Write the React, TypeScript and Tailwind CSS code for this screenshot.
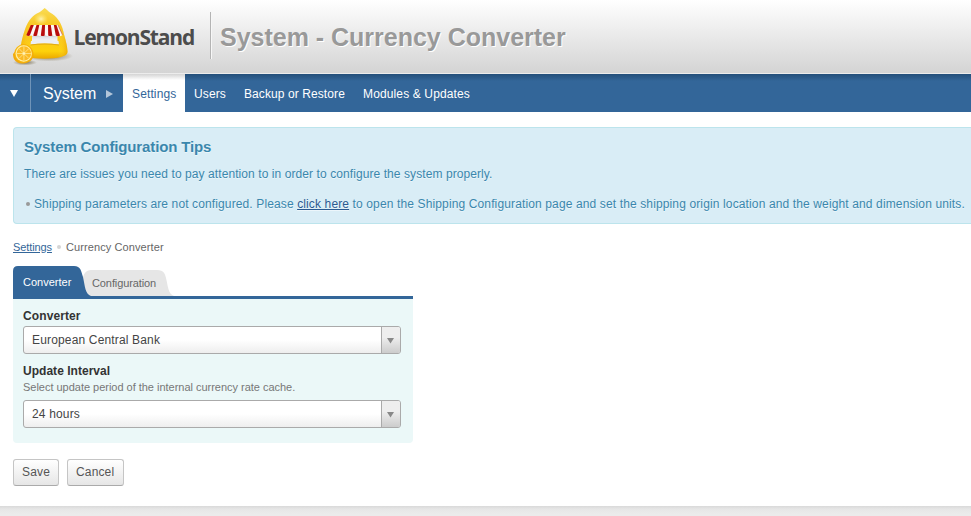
import React from "react";

const BODY =
  "M32.700 1C34.500 2 35.500 4 38 5.500C45 9.500 49 15 51.200 24C53 32 55.500 38 55.500 45C55.500 49.500 46 51.700 32 51.700C18 51.700 8.500 49.500 8.500 44C8.500 37 11 28 13.500 21C17 12.500 21 8 27 5.500C30 4 31 2 32.700 1Z";

function Logo() {
  return (
    <svg width="64" height="62" viewBox="0 0 64 62" className="block shrink-0">
      <defs>
        <linearGradient id="body" x1="0" y1="0" x2="0" y2="1">
          <stop offset="0" stopColor="#f9dc55" />
          <stop offset="0.3" stopColor="#f8c929" />
          <stop offset="0.6" stopColor="#fbc81c" />
          <stop offset="0.85" stopColor="#fdd20c" />
          <stop offset="1" stopColor="#eba800" />
        </linearGradient>
        <linearGradient id="side" x1="0" y1="0" x2="1" y2="0">
          <stop offset="0" stopColor="#e89a00" stopOpacity="0.4" />
          <stop offset="0.25" stopColor="#ffe040" stopOpacity="0" />
          <stop offset="0.8" stopColor="#ffe040" stopOpacity="0" />
          <stop offset="1" stopColor="#e89a00" stopOpacity="0.6" />
        </linearGradient>
        <radialGradient id="shine">
          <stop offset="0" stopColor="#fffbd0" stopOpacity="0.8" />
          <stop offset="1" stopColor="#fff080" stopOpacity="0" />
        </radialGradient>
        <radialGradient id="shade">
          <stop offset="0" stopColor="#5a4a20" stopOpacity="0.7" />
          <stop offset="1" stopColor="#5a4a20" stopOpacity="0" />
        </radialGradient>
        <linearGradient id="hole" x1="0" y1="0" x2="0" y2="1">
          <stop offset="0" stopColor="#a9a6a0" />
          <stop offset="0.4" stopColor="#e2e3e8" />
          <stop offset="1" stopColor="#f8f9fb" />
        </linearGradient>
      </defs>
      <ellipse cx="37" cy="49" rx="24" ry="5.500" fill="url(#shade)" />
      <path d={BODY} fill="url(#body)" />
      <path d={BODY} fill="url(#side)" />
      <ellipse cx="29" cy="12" rx="7" ry="6" fill="url(#shine)" />
      <path d="M20 27H45.500V35Q33 32.500 20 35Z" fill="url(#hole)" />
      <path d="M19 34Q32.500 31.500 46.500 34L47 37.500Q32.500 35.500 18.500 37.500Z" fill="#eceef3" />
      <path d="M18.500 37.500Q32.500 35.500 47 37.500V38.500Q32.500 36.500 18.500 38.500Z" fill="#dfaa14" />
      <path d="M19.500 18H46L50.500 28Q48.500 30 46.500 28.500Q43.500 30 40.500 28.500Q37 30 33 28.500Q29.500 30 25.500 28.500Q22 30 19 28.500Q16.500 29.500 14.500 28Z" fill="#fbf8f5" />
      <g fill="#b90c0c">
        <path d="M18.800 18H21.800L17.800 28.500Q16 29.500 14.300 28Z" />
        <path d="M24.500 18H27.300L25 28.500Q23 29.500 21.200 28.500Z" />
        <path d="M30.200 18H33L32.700 28.500Q30.600 29.500 28.800 28.500Z" />
        <path d="M36 18H38.800L40.300 28.500Q38.200 29.500 36.200 28.500Z" />
        <path d="M41.800 18H44.500L48 28.500Q46 29.500 43.800 28.500Z" />
      </g>
      <path d="M46 18L50.500 28" stroke="#cc5b50" strokeWidth="0.700" />
      <ellipse cx="13" cy="55.500" rx="12" ry="3" fill="url(#shade)" />
      <path d="M9 37.500C15 36 22 41 21.500 48C21.500 53 16 57 10 56.500C4 56 1 53 1 47Z" fill="#f2a90b" />
      <circle cx="11.500" cy="46.500" r="9.200" fill="#f7b50f" />
      <circle cx="11.700" cy="46.500" r="8.200" fill="#fff0a6" />
      <circle cx="11.900" cy="46.500" r="7.200" fill="#fbba25" />
      <path d="M11.900 39.300V53.700M4.700 46.500H19.100M6.800 41.400L17 51.600M17 41.400L6.800 51.600" stroke="#ffe694" strokeWidth="0.800" />
      <circle cx="11.900" cy="46.500" r="1.200" fill="#fff3b8" />
    </svg>
  );
}

function Select({ value }: { value: string }) {
  return (
    <div className="flex h-7 w-[378px] overflow-hidden rounded-[3px] border border-[#aaa] bg-linear-to-b from-white from-50% to-[#eee]">
      <span className="flex-1 pl-2 text-[12px] leading-[26px] tracking-[0.16px] text-[#444]">{value}</span>
      <span className="flex w-[19px] items-center justify-start border-l border-[#aaa] bg-linear-to-b from-[#eee] from-40% to-[#ccc] pl-[5px]">
        <svg width="7" height="6" viewBox="0 0 7 6" className="mt-px">
          <path d="M0 0H7L3.500 5.500Z" fill="#888" />
        </svg>
      </span>
    </div>
  );
}

function Button({ label, width }: { label: string; width: string }) {
  return (
    <button
      className={`h-[27px] rounded-[3px] border border-[#c5c5c5] border-b-[#aaa] bg-linear-to-b from-white to-[#e6e6e6] pb-px pl-2 text-left text-[12px] leading-none tracking-[0.15px] text-[#555] ${width}`}
    >
      {label}
    </button>
  );
}

export default function App() {
  return (
    <div className="flex h-[516px] w-[971px] flex-col overflow-hidden bg-white font-['Liberation_Sans',Arial,sans-serif] text-[12px]">
      <header className="flex h-[74px] shrink-0 border-b border-[#ececec] bg-linear-to-b from-white to-[#d4d4d4]">
        <div className="flex w-[210px] pt-[7px] pl-3">
          <Logo />
          <span className="-ml-[2.5px] pt-[15px] font-['Open_Sans',sans-serif] text-[21px] leading-[30px] font-bold tracking-[-1.15px] text-[#4c4c4c]">LemonStand</span>
        </div>
        <div className="mt-3 h-[47px] w-0.5 border-r border-l border-r-[#f7f7f7] border-l-[#b4b4b4]" />
        <h1 className="pt-[22px] pl-2 text-[25px] leading-[30px] font-bold tracking-[-0.01px] whitespace-nowrap text-[#999] [text-shadow:1px_1px_0_#fff]">System - Currency Converter</h1>
      </header>

      <nav className="flex h-[38px] shrink-0 bg-[#336699] bg-linear-to-b from-[#244f7a] to-[#336699] to-[7px] text-white">
        <div className="flex w-[31px] items-center border-r border-[#7094b8] pl-2.5">
          <svg width="8" height="7" viewBox="0 0 8 7"><path d="M0 0H8L4 7Z" fill="#fff" /></svg>
        </div>
        <div className="flex w-[92px] items-center pl-3">
          <span className="w-[63px] pt-0.5 text-[16px]">System</span>
          <svg width="7" height="8" viewBox="0 0 7 8" className="mt-px"><path d="M0 0L7 4L0 8Z" fill="#b3c6da" /></svg>
        </div>
        <div className="flex text-[12px] leading-[40px] tracking-[0.13px] whitespace-nowrap">
          <a className="h-[38px] w-[62px] bg-linear-to-b from-[#d4d4d4] to-white to-[6px] pl-[9px] text-[#336699]">Settings</a>
          <a className="w-[50px] pl-[9px]">Users</a>
          <a className="w-[119px] pl-[9px] tracking-[0.09px]">Backup or Restore</a>
          <a className="pl-[9px]">Modules &amp; Updates</a>
        </div>
      </nav>

      <section className="mt-[15px] ml-[13px] h-[97px] shrink-0 rounded-l-[4px] border border-r-0 border-[#bce4ec] bg-[#d9edf6] pl-2.5 whitespace-nowrap text-[#3a87ad] [text-shadow:0_1px_0_rgba(255,255,255,0.5)]">
        <h2 className="pt-2.5 text-[15px] leading-[18px] font-bold tracking-[-0.13px]">System Configuration Tips</h2>
        <p className="mt-[9px] text-[12px] leading-[18px] tracking-[0.08px]">There are issues you need to pay attention to in order to configure the system properly.</p>
        <div className="mt-3 flex items-center text-[12px] leading-[18px] tracking-[0.13px]">
          <span className="mr-[4px] mb-px ml-0.5 size-1 rounded-full bg-[#999]" />
          <p><span className="tracking-[0.12px]">Shipping parameters are not configured. Please </span><a className="text-[#2b5a91] underline">click here</a> to open the Shipping Configuration page and set the shipping origin location and the weight and dimension units.</p>
        </div>
      </section>

      <div className="mt-4 ml-[13px] flex h-[15px] shrink-0 items-center text-[11px] leading-[15px] text-[#666]">
        <a className="tracking-[-0.1px] text-[#336699] underline">Settings</a>
        <span className="mx-[5px] mb-px size-1 rounded-full bg-[#d5d5d5]" />
        <span className="tracking-[0.1px]">Currency Converter</span>
      </div>

      <main className="mt-[11px] ml-[13px] w-[400px] shrink-0">
        <div className="relative h-[30px] text-[11px]">
          <svg width="162" height="30" viewBox="0 0 162 30" className="absolute inset-0">
            <path d="M70 11Q72 4 78 4H144C151 4 152 8 153 12C155 20 155 28 161 30H72Z" fill="#e6e6e6" />
            <path d="M0 30V5Q0 0 5 0H61C68 0 68 5 70 11C72 20 72 28 78 30Z" fill="#336699" />
          </svg>
          <div className="relative flex h-full leading-[33px]">
            <span className="w-[69px] pl-2.5 text-white">Converter</span>
            <span className="pt-px pl-2.5 tracking-[-0.1px] text-[#666]">Configuration</span>
          </div>
        </div>
        <div className="h-[147px] rounded-b-[4px] border-t-3 border-[#336699] bg-[#ebf8f8] pl-2.5">
          <div className="pt-[9px] pb-0.5 text-[12px] leading-4 font-bold tracking-[0.1px] text-[#333]">Converter</div>
          <Select value="European Central Bank" />
          <div className="pt-[9px] text-[12px] leading-4 font-bold tracking-[0.03px] text-[#333]">Update Interval</div>
          <div className="pt-px pb-[5px] text-[11px] leading-[15px] tracking-[-0.02px] text-[#777]">Select update period of the internal currency rate cache.</div>
          <Select value="24 hours" />
        </div>
      </main>

      <div className="mt-4 ml-[13px] flex shrink-0 gap-2">
        <Button label="Save" width="w-[46px]" />
        <Button label="Cancel" width="w-[57px]" />
      </div>
      <footer className="mt-5 flex-1 bg-linear-to-b from-[#d9d9d9] via-[#e6e6e6] via-[3px] to-[#ebebeb] to-[8px]" />
    </div>
  );
}
